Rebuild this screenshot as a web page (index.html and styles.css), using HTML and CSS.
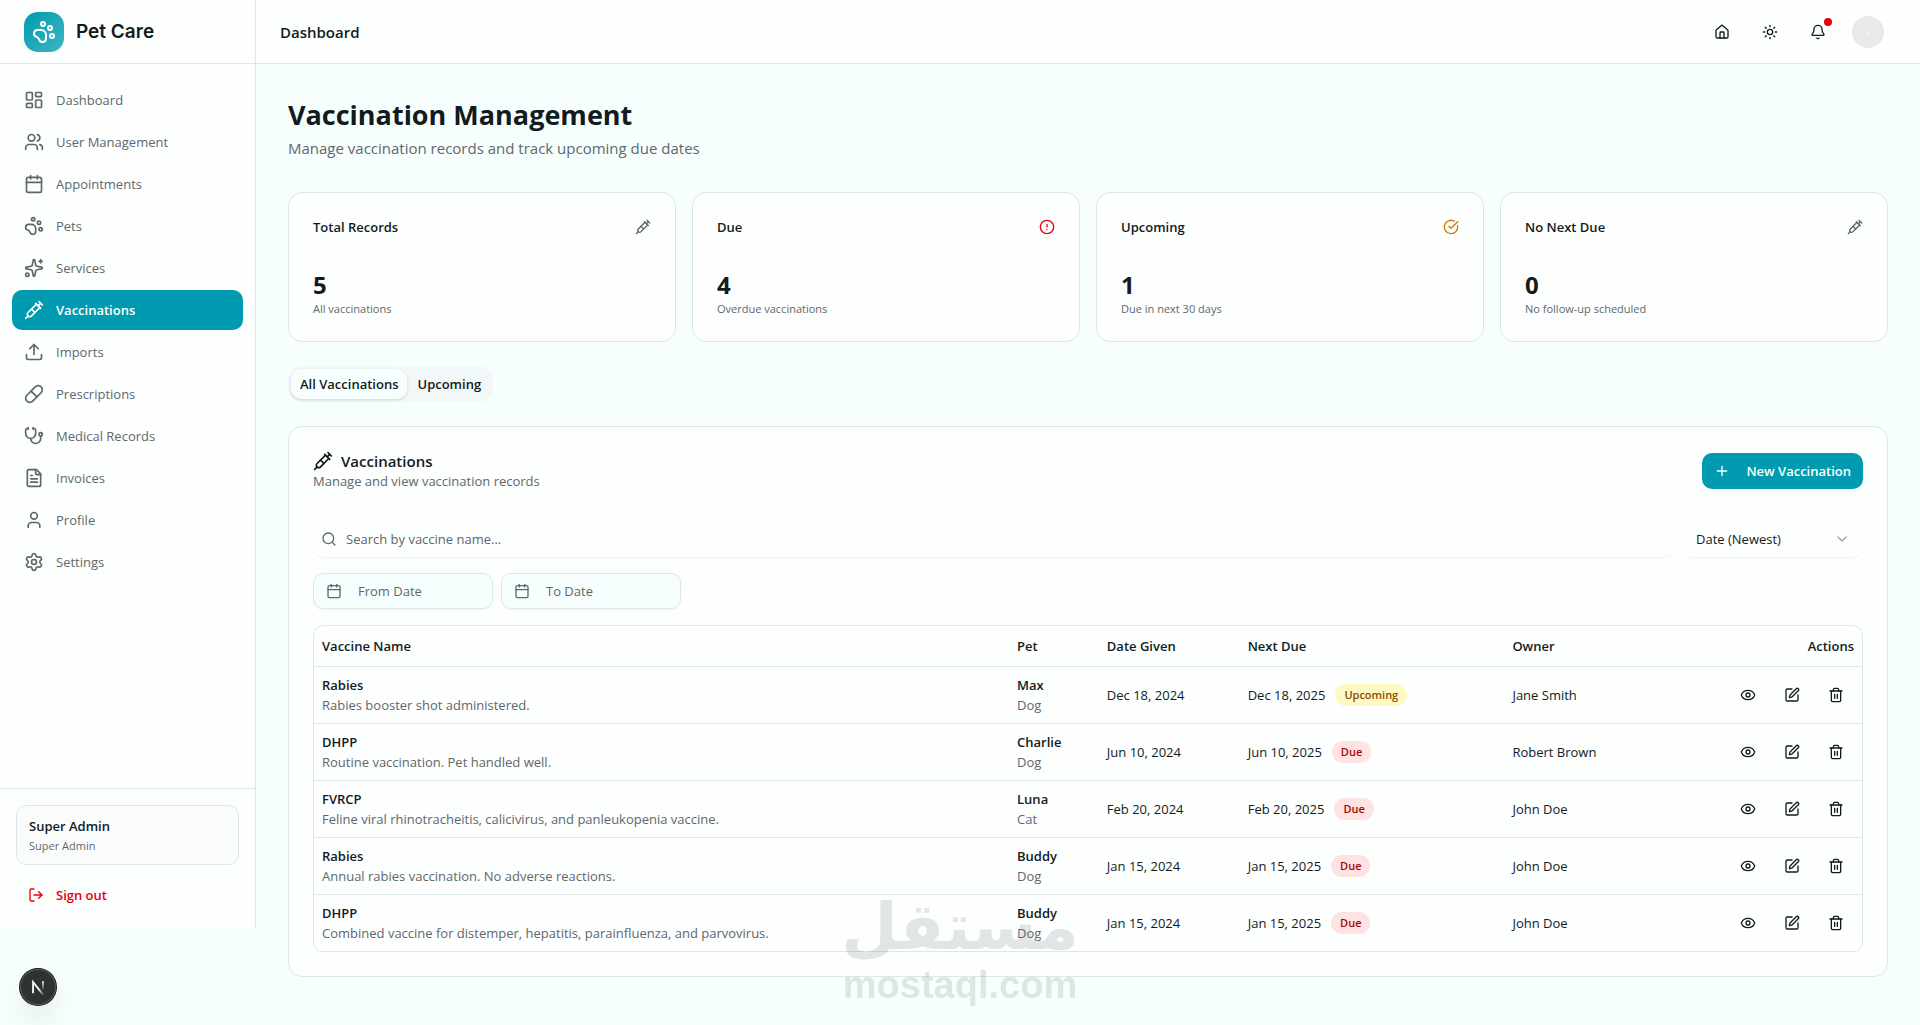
FILE: index.html
```html
<!DOCTYPE html>
<html lang="en">
<head>
<meta charset="utf-8">
<meta name="viewport" content="width=device-width, initial-scale=1">
<title>Vaccination Management - Pet Care</title>
<link rel="stylesheet" href="styles.css">
</head>
<body>
<svg class="sprite" aria-hidden="true">
  <symbol id="i-dashboard" viewBox="0 0 24 24"><rect x="3" y="3" width="7" height="9" rx="1"/><rect x="14" y="3" width="7" height="5" rx="1"/><rect x="14" y="12" width="7" height="9" rx="1"/><rect x="3" y="16" width="7" height="5" rx="1"/></symbol>
  <symbol id="i-users" viewBox="0 0 24 24"><path d="M16 21v-2a4 4 0 0 0-4-4H6a4 4 0 0 0-4 4v2"/><path d="M16 3.128a4 4 0 0 1 0 7.744"/><path d="M22 21v-2a4 4 0 0 0-3-3.87"/><circle cx="9" cy="7" r="4"/></symbol>
  <symbol id="i-calendar" viewBox="0 0 24 24"><path d="M8 2v4"/><path d="M16 2v4"/><rect x="3" y="4" width="18" height="18" rx="2"/><path d="M3 10h18"/></symbol>
  <symbol id="i-paw" viewBox="0 0 24 24"><circle cx="11" cy="4" r="2"/><circle cx="18" cy="8" r="2"/><circle cx="20" cy="16" r="2"/><path d="M9 10a5 5 0 0 1 5 5v3.5a3.5 3.5 0 0 1-6.84 1.045Q6.52 17.48 4.46 16.84A3.5 3.5 0 0 1 5.5 10Z"/></symbol>
  <symbol id="i-sparkles" viewBox="0 0 24 24"><path d="M11.017 2.814a1 1 0 0 1 1.966 0l1.051 5.558a2 2 0 0 0 1.594 1.594l5.558 1.051a1 1 0 0 1 0 1.966l-5.558 1.051a2 2 0 0 0-1.594 1.594l-1.051 5.558a1 1 0 0 1-1.966 0l-1.051-5.558a2 2 0 0 0-1.594-1.594l-5.558-1.051a1 1 0 0 1 0-1.966l5.558-1.051a2 2 0 0 0 1.594-1.594z"/><path d="M20 2v4"/><path d="M22 4h-4"/><circle cx="4" cy="20" r="2"/></symbol>
  <symbol id="i-syringe" viewBox="0 0 24 24"><path d="m18 2 4 4"/><path d="m17 7 3-3"/><path d="M19 9 8.7 19.3c-1 1-2.5 1-3.4 0l-.6-.6c-1-1-1-2.5 0-3.4L15 5"/><path d="m9 11 4 4"/><path d="m5 19-3 3"/><path d="m14 4 6 6"/></symbol>
  <symbol id="i-upload" viewBox="0 0 24 24"><path d="M12 3v12"/><path d="m17 8-5-5-5 5"/><path d="M21 15v4a2 2 0 0 1-2 2H5a2 2 0 0 1-2-2v-4"/></symbol>
  <symbol id="i-pill" viewBox="0 0 24 24"><path d="m10.5 20.5 10-10a4.95 4.95 0 1 0-7-7l-10 10a4.95 4.95 0 1 0 7 7Z"/><path d="m8.5 8.5 7 7"/></symbol>
  <symbol id="i-stethoscope" viewBox="0 0 24 24"><path d="M11 2v2"/><path d="M5 2v2"/><path d="M5 3H4a2 2 0 0 0-2 2v4a6 6 0 0 0 12 0V5a2 2 0 0 0-2-2h-1"/><path d="M8 15a6 6 0 0 0 12 0v-3"/><circle cx="20" cy="10" r="2"/></symbol>
  <symbol id="i-file" viewBox="0 0 24 24"><path d="M15 2H6a2 2 0 0 0-2 2v16a2 2 0 0 0 2 2h12a2 2 0 0 0 2-2V7Z"/><path d="M14 2v4a2 2 0 0 0 2 2h4"/><path d="M10 9H8"/><path d="M16 13H8"/><path d="M16 17H8"/></symbol>
  <symbol id="i-user" viewBox="0 0 24 24"><path d="M19 21v-2a4 4 0 0 0-4-4H9a4 4 0 0 0-4 4v2"/><circle cx="12" cy="7" r="4"/></symbol>
  <symbol id="i-settings" viewBox="0 0 24 24"><path d="M9.671 4.136a2.34 2.34 0 0 1 4.659 0 2.34 2.34 0 0 0 3.319 1.915 2.34 2.34 0 0 1 2.33 4.033 2.34 2.34 0 0 0 0 3.831 2.34 2.34 0 0 1-2.33 4.033 2.34 2.34 0 0 0-3.319 1.915 2.34 2.34 0 0 1-4.659 0 2.34 2.34 0 0 0-3.32-1.915 2.34 2.34 0 0 1-2.33-4.033 2.34 2.34 0 0 0 0-3.831A2.34 2.34 0 0 1 6.35 6.051a2.34 2.34 0 0 0 3.319-1.915"/><circle cx="12" cy="12" r="3"/></symbol>
  <symbol id="i-logout" viewBox="0 0 24 24"><path d="m16 17 5-5-5-5"/><path d="M21 12H9"/><path d="M9 21H5a2 2 0 0 1-2-2V5a2 2 0 0 1 2-2h4"/></symbol>
  <symbol id="i-home" viewBox="0 0 24 24"><path d="M15 21v-8a1 1 0 0 0-1-1h-4a1 1 0 0 0-1 1v8"/><path d="M3 10a2 2 0 0 1 .709-1.528l7-6a2 2 0 0 1 2.582 0l7 6A2 2 0 0 1 21 10v9a2 2 0 0 1-2 2H5a2 2 0 0 1-2-2z"/></symbol>
  <symbol id="i-sun" viewBox="0 0 24 24"><circle cx="12" cy="12" r="4"/><path d="M12 2v2M12 20v2M4.93 4.93l1.41 1.41M17.66 17.66l1.41 1.41M2 12h2M20 12h2M6.34 17.66l-1.41 1.41M19.07 4.93l-1.41 1.41"/></symbol>
  <symbol id="i-bell" viewBox="0 0 24 24"><path d="M10.268 21a2 2 0 0 0 3.464 0"/><path d="M3.262 15.326A1 1 0 0 0 4 17h16a1 1 0 0 0 .74-1.673C19.41 13.956 18 12.499 18 8A6 6 0 0 0 6 8c0 4.499-1.411 5.956-2.738 7.326"/></symbol>
  <symbol id="i-alert" viewBox="0 0 24 24"><circle cx="12" cy="12" r="10"/><path d="M12 8v4M12 16h.01"/></symbol>
  <symbol id="i-check" viewBox="0 0 24 24"><path d="M21.801 10A10 10 0 1 1 17 3.335"/><path d="m9 11 3 3L22 4"/></symbol>
  <symbol id="i-plus" viewBox="0 0 24 24"><path d="M5 12h14M12 5v14"/></symbol>
  <symbol id="i-search" viewBox="0 0 24 24"><circle cx="11" cy="11" r="8"/><path d="m21 21-4.34-4.34"/></symbol>
  <symbol id="i-chevron" viewBox="0 0 24 24"><path d="m6 9 6 6 6-6"/></symbol>
  <symbol id="i-eye" viewBox="0 0 24 24"><path d="M2.062 12.348a1 1 0 0 1 0-.696 10.75 10.75 0 0 1 19.876 0 1 1 0 0 1 0 .696 10.75 10.75 0 0 1-19.876 0"/><circle cx="12" cy="12" r="3"/></symbol>
  <symbol id="i-edit" viewBox="0 0 24 24"><path d="M12 3H5a2 2 0 0 0-2 2v14a2 2 0 0 0 2 2h14a2 2 0 0 0 2-2v-7"/><path d="M18.375 2.625a1 1 0 0 1 3 3l-9.013 9.014a2 2 0 0 1-.853.505l-2.873.84a.5.5 0 0 1-.62-.62l.84-2.873a2 2 0 0 1 .506-.852z"/></symbol>
  <symbol id="i-trash" viewBox="0 0 24 24"><path d="M3 6h18"/><path d="M19 6v14c0 1-1 2-2 2H7c-1 0-2-1-2-2V6"/><path d="M8 6V4c0-1 1-2 2-2h4c1 0 2 1 2 2v2"/><path d="M10 11v6M14 11v6"/></symbol>
</svg>

<div class="app">
  <aside class="sidebar">
    <div class="brand">
      <span class="brand-mark"><svg class="icon icon-brand"><use href="#i-paw"/></svg></span>
      <span class="brand-name">Pet Care</span>
    </div>
    <nav class="nav">
      <a class="nav-link" href="#"><svg class="icon icon-lg"><use href="#i-dashboard"/></svg>Dashboard</a>
      <a class="nav-link" href="#"><svg class="icon icon-lg"><use href="#i-users"/></svg>User Management</a>
      <a class="nav-link" href="#"><svg class="icon icon-lg"><use href="#i-calendar"/></svg>Appointments</a>
      <a class="nav-link" href="#"><svg class="icon icon-lg"><use href="#i-paw"/></svg>Pets</a>
      <a class="nav-link" href="#"><svg class="icon icon-lg"><use href="#i-sparkles"/></svg>Services</a>
      <a class="nav-link active" href="#" aria-current="page"><svg class="icon icon-lg"><use href="#i-syringe"/></svg>Vaccinations</a>
      <a class="nav-link" href="#"><svg class="icon icon-lg"><use href="#i-upload"/></svg>Imports</a>
      <a class="nav-link" href="#"><svg class="icon icon-lg"><use href="#i-pill"/></svg>Prescriptions</a>
      <a class="nav-link" href="#"><svg class="icon icon-lg"><use href="#i-stethoscope"/></svg>Medical Records</a>
      <a class="nav-link" href="#"><svg class="icon icon-lg"><use href="#i-file"/></svg>Invoices</a>
      <a class="nav-link" href="#"><svg class="icon icon-lg"><use href="#i-user"/></svg>Profile</a>
      <a class="nav-link" href="#"><svg class="icon icon-lg"><use href="#i-settings"/></svg>Settings</a>
    </nav>
    <div class="account">
      <div class="account-card">
        <div class="account-name">Super Admin</div>
        <div class="account-role">Super Admin</div>
      </div>
      <button class="sign-out" type="button"><svg class="icon"><use href="#i-logout"/></svg>Sign out</button>
    </div>
  </aside>

  <div class="page">
    <header class="topbar">
      <div class="topbar-title">Dashboard</div>
      <div class="topbar-actions">
        <button class="icon-button" type="button" aria-label="Home"><svg class="icon"><use href="#i-home"/></svg></button>
        <button class="icon-button" type="button" aria-label="Toggle theme"><svg class="icon"><use href="#i-sun"/></svg></button>
        <button class="icon-button" type="button" aria-label="Notifications"><svg class="icon"><use href="#i-bell"/></svg><span class="dot"></span></button>
        <button class="avatar-button" type="button" aria-label="Account"><span class="avatar">S</span></button>
      </div>
    </header>

    <main class="content">
      <div class="heading">
        <h1>Vaccination Management</h1>
        <p>Manage vaccination records and track upcoming due dates</p>
      </div>

      <section class="stats">
        <article class="stat">
          <div class="stat-head"><h2>Total Records</h2><svg class="icon muted"><use href="#i-syringe"/></svg></div>
          <div class="stat-value">5</div><div class="stat-note">All vaccinations</div>
        </article>
        <article class="stat">
          <div class="stat-head"><h2>Due</h2><svg class="icon danger"><use href="#i-alert"/></svg></div>
          <div class="stat-value">4</div><div class="stat-note">Overdue vaccinations</div>
        </article>
        <article class="stat">
          <div class="stat-head"><h2>Upcoming</h2><svg class="icon warning"><use href="#i-check"/></svg></div>
          <div class="stat-value">1</div><div class="stat-note">Due in next 30 days</div>
        </article>
        <article class="stat">
          <div class="stat-head"><h2>No Next Due</h2><svg class="icon muted"><use href="#i-syringe"/></svg></div>
          <div class="stat-value">0</div><div class="stat-note">No follow-up scheduled</div>
        </article>
      </section>

      <div class="tabs" role="tablist">
        <button class="tab selected" type="button" role="tab" aria-selected="true">All Vaccinations</button>
        <button class="tab" type="button" role="tab" aria-selected="false">Upcoming</button>
      </div>

      <section class="panel">
        <div class="panel-head">
          <div>
            <h2 class="panel-title"><svg class="icon icon-lg"><use href="#i-syringe"/></svg>Vaccinations</h2>
            <p class="panel-note">Manage and view vaccination records</p>
          </div>
          <button class="primary" type="button"><svg class="icon"><use href="#i-plus"/></svg>New Vaccination</button>
        </div>

        <div class="filters">
          <label class="search"><svg class="icon muted"><use href="#i-search"/></svg><input type="search" placeholder="Search by vaccine name..." aria-label="Search by vaccine name"></label>
          <div class="select">
            <select aria-label="Sort by"><option>Date (Newest)</option><option>Date (Oldest)</option></select>
            <svg class="icon"><use href="#i-chevron"/></svg>
          </div>
        </div>
        <div class="dates">
          <button class="date" type="button"><svg class="icon"><use href="#i-calendar"/></svg>From Date</button>
          <button class="date" type="button"><svg class="icon"><use href="#i-calendar"/></svg>To Date</button>
        </div>

        <div class="table-wrap">
          <table>
            <colgroup><col class="c-name"><col class="c-pet"><col class="c-given"><col class="c-next"><col class="c-owner"><col class="c-actions"></colgroup>
            <thead><tr><th>Vaccine Name</th><th>Pet</th><th>Date Given</th><th>Next Due</th><th>Owner</th><th class="end">Actions</th></tr></thead>
            <tbody>
              <tr>
                <td><strong>Rabies</strong><span class="sub">Rabies booster shot administered.</span></td>
                <td><strong>Max</strong><span class="sub">Dog</span></td>
                <td>Dec 18, 2024</td>
                <td><div class="due">Dec 18, 2025<span class="badge soon">Upcoming</span></div></td>
                <td>Jane Smith</td>
                <td><div class="row-actions"><button class="icon-button" type="button" aria-label="View"><svg class="icon"><use href="#i-eye"/></svg></button><button class="icon-button" type="button" aria-label="Edit"><svg class="icon"><use href="#i-edit"/></svg></button><button class="icon-button" type="button" aria-label="Delete"><svg class="icon"><use href="#i-trash"/></svg></button></div></td>
              </tr>
              <tr>
                <td><strong>DHPP</strong><span class="sub">Routine vaccination. Pet handled well.</span></td>
                <td><strong>Charlie</strong><span class="sub">Dog</span></td>
                <td>Jun 10, 2024</td>
                <td><div class="due">Jun 10, 2025<span class="badge late">Due</span></div></td>
                <td>Robert Brown</td>
                <td><div class="row-actions"><button class="icon-button" type="button" aria-label="View"><svg class="icon"><use href="#i-eye"/></svg></button><button class="icon-button" type="button" aria-label="Edit"><svg class="icon"><use href="#i-edit"/></svg></button><button class="icon-button" type="button" aria-label="Delete"><svg class="icon"><use href="#i-trash"/></svg></button></div></td>
              </tr>
              <tr>
                <td><strong>FVRCP</strong><span class="sub">Feline viral rhinotracheitis, calicivirus, and panleukopenia vaccine.</span></td>
                <td><strong>Luna</strong><span class="sub">Cat</span></td>
                <td>Feb 20, 2024</td>
                <td><div class="due">Feb 20, 2025<span class="badge late">Due</span></div></td>
                <td>John Doe</td>
                <td><div class="row-actions"><button class="icon-button" type="button" aria-label="View"><svg class="icon"><use href="#i-eye"/></svg></button><button class="icon-button" type="button" aria-label="Edit"><svg class="icon"><use href="#i-edit"/></svg></button><button class="icon-button" type="button" aria-label="Delete"><svg class="icon"><use href="#i-trash"/></svg></button></div></td>
              </tr>
              <tr>
                <td><strong>Rabies</strong><span class="sub">Annual rabies vaccination. No adverse reactions.</span></td>
                <td><strong>Buddy</strong><span class="sub">Dog</span></td>
                <td>Jan 15, 2024</td>
                <td><div class="due">Jan 15, 2025<span class="badge late">Due</span></div></td>
                <td>John Doe</td>
                <td><div class="row-actions"><button class="icon-button" type="button" aria-label="View"><svg class="icon"><use href="#i-eye"/></svg></button><button class="icon-button" type="button" aria-label="Edit"><svg class="icon"><use href="#i-edit"/></svg></button><button class="icon-button" type="button" aria-label="Delete"><svg class="icon"><use href="#i-trash"/></svg></button></div></td>
              </tr>
              <tr>
                <td><strong>DHPP</strong><span class="sub">Combined vaccine for distemper, hepatitis, parainfluenza, and parvovirus.</span></td>
                <td><strong>Buddy</strong><span class="sub">Dog</span></td>
                <td>Jan 15, 2024</td>
                <td><div class="due">Jan 15, 2025<span class="badge late">Due</span></div></td>
                <td>John Doe</td>
                <td><div class="row-actions"><button class="icon-button" type="button" aria-label="View"><svg class="icon"><use href="#i-eye"/></svg></button><button class="icon-button" type="button" aria-label="Edit"><svg class="icon"><use href="#i-edit"/></svg></button><button class="icon-button" type="button" aria-label="Delete"><svg class="icon"><use href="#i-trash"/></svg></button></div></td>
              </tr>
            </tbody>
          </table>
        </div>
      </section>
    </main>
  </div>
</div>

<div class="watermark">
  <span class="watermark-ar" lang="ar" dir="rtl">مستقل</span>
  <span class="watermark-en">mostaql.com</span>
</div>

<button class="dev-badge" type="button" aria-label="Open developer tools">
  <svg viewBox="0 0 40 40" width="36" height="36" fill="none">
    <defs>
      <linearGradient id="fade-diagonal" x1="22" y1="22" x2="27" y2="29" gradientUnits="userSpaceOnUse"><stop stop-color="#fff"/><stop offset="1" stop-color="#fff" stop-opacity="0"/></linearGradient>
      <linearGradient id="fade-stem" x1="25" y1="13" x2="25" y2="24" gradientUnits="userSpaceOnUse"><stop stop-color="#fff"/><stop offset="1" stop-color="#fff" stop-opacity="0"/></linearGradient>
    </defs>
    <path d="M14.500 27V14.500L26 29" stroke="url(#fade-diagonal)" stroke-width="2"/>
    <path d="M25.500 13.500V23" stroke="url(#fade-stem)" stroke-width="2"/>
  </svg>
</button>
</body>
</html>
```

FILE: styles.css
```css
:root {
  --bg: #f7fffe;
  --card: #fdfefe;
  --border: #dce8e8;
  --text: #121b1d;
  --muted: #5e686b;
  --primary: #009bb0;
  --danger: #e7000b;
}

* { box-sizing: border-box; }

body {
  margin: 0;
  background: var(--bg);
  color: var(--text);
  font: 13px/20px "Open Sans", "Noto Sans", sans-serif;
}

h1, h2, p { margin: 0; }
button, input, select { font: inherit; color: inherit; }
button { border: 0; padding: 0; background: none; cursor: pointer; }
a { color: inherit; text-decoration: none; }

.sprite { display: none; }
.icon {
  flex: none;
  width: 16px;
  height: 16px;
  fill: none;
  stroke: currentColor;
  stroke-width: 2;
  stroke-linecap: round;
  stroke-linejoin: round;
}
.icon-lg { width: 20px; height: 20px; }
.icon-brand { width: 24px; height: 24px; }
.muted { color: var(--muted); }
.danger { color: var(--danger); }
.warning { color: #d07a08; }

.app { display: flex; align-items: flex-start; min-height: 100vh; }

/* Sidebar */
.sidebar {
  flex: none;
  display: flex;
  flex-direction: column;
  width: 256px;
  min-height: calc(100vh - 96px);
  background: var(--card);
  border-right: 1px solid var(--border);
}
.brand {
  display: flex;
  align-items: center;
  gap: 12px;
  height: 64px;
  padding: 0 24px;
  border-bottom: 1px solid var(--border);
}
.brand-mark {
  display: grid;
  place-items: center;
  width: 40px;
  height: 40px;
  border-radius: 14px;
  background: linear-gradient(135deg, #009bb0, #40b4c3);
  color: #fff;
}
.brand-name { font: 600 19px/28px Inter, sans-serif; }
.nav { flex: 1; display: flex; flex-direction: column; gap: 2px; padding: 16px 12px; }
.nav-link {
  display: flex;
  align-items: center;
  gap: 12px;
  height: 40px;
  padding: 0 12px;
  border-radius: 10px;
  color: var(--muted);
}
.nav-link.active { background: var(--primary); color: #fff; font-weight: 600; }
.account {
  display: flex;
  flex-direction: column;
  gap: 12px;
  padding: 16px;
  border-top: 1px solid var(--border);
}
.account-card {
  display: flex;
  flex-direction: column;
  gap: 2px;
  padding: 10px 12px;
  border: 1px solid var(--border);
  border-radius: 10px;
  background: #fafcfc;
}
.account-name { font-weight: 600; }
.account-role { font-size: 11px; line-height: 16px; color: var(--muted); }
.sign-out {
  display: flex;
  align-items: center;
  gap: 12px;
  height: 36px;
  padding: 0 12px;
  color: var(--danger);
  font-weight: 600;
}

/* Top bar */
.page { flex: 1; min-width: 0; }
.topbar {
  display: flex;
  align-items: center;
  justify-content: space-between;
  height: 64px;
  padding: 0 32px 0 24px;
  background: var(--card);
  border-bottom: 1px solid var(--border);
}
.topbar-title { font-size: 15px; font-weight: 600; line-height: 24px; }
.topbar-actions { display: flex; align-items: center; gap: 12px; }
.icon-button {
  position: relative;
  display: grid;
  place-items: center;
  width: 36px;
  height: 36px;
}
.dot {
  position: absolute;
  top: 4px;
  right: 4px;
  width: 8px;
  height: 8px;
  border-radius: 50%;
  background: var(--danger);
}
.avatar-button { display: grid; place-items: center; width: 40px; height: 40px; }
.avatar {
  display: grid;
  place-items: center;
  width: 32px;
  height: 32px;
  border-radius: 50%;
  background: #e8e9ea;
  color: #f6f7f7;
  font-size: 8px;
}

/* Content */
.content { display: flex; flex-direction: column; gap: 24px; padding: 32px; }
.heading { display: flex; flex-direction: column; gap: 2px; padding-bottom: 8px; }
.heading h1 { font-size: 27px; line-height: 38px; font-weight: 700; }
.heading p { font-size: 15px; line-height: 24px; color: var(--muted); }

.stats { display: grid; grid-template-columns: repeat(4, 1fr); gap: 16px; }
.stat {
  padding: 24px;
  border: 1px solid var(--border);
  border-radius: 14px;
  background: var(--card);
}
.stat-head {
  display: flex;
  align-items: center;
  justify-content: space-between;
  margin-bottom: 32px;
}
.stat-head h2 { font-size: 13px; line-height: 20px; font-weight: 600; }
.stat-value { font-size: 24px; line-height: 32px; font-weight: 700; }
.stat-note { font-size: 11px; line-height: 16px; color: var(--muted); }

.tabs {
  align-self: flex-start;
  display: flex;
  gap: 1px;
  height: 36px;
  padding: 3px;
  border-radius: 14px;
  background: #f2f7f7;
}
.tab { padding: 0 9px; border-radius: 10px; font-weight: 600; }
.tab.selected { background: var(--bg); box-shadow: 0 1px 3px rgba(0, 0, 0, .15); }

.panel {
  padding: 24px;
  border: 1px solid var(--border);
  border-radius: 14px;
  background: var(--card);
}
.panel-head {
  display: flex;
  align-items: center;
  justify-content: space-between;
  margin-bottom: 30px;
}
.panel-title {
  display: flex;
  align-items: center;
  gap: 8px;
  font-size: 15px;
  line-height: 20px;
  font-weight: 600;
}
.panel-note { color: var(--muted); }
.primary {
  display: flex;
  align-items: center;
  gap: 16px;
  height: 36px;
  padding: 0 12px;
  border-radius: 10px;
  background: var(--primary);
  color: #fff;
  font-weight: 600;
}

.filters { display: flex; gap: 8px; margin-bottom: 16px; }
.search {
  flex: 1;
  display: flex;
  align-items: center;
  gap: 9px;
  height: 36px;
  padding: 0 8px;
  border-radius: 10px;
  box-shadow: 0 1px 2px rgba(0, 0, 0, .05);
}
.search input { flex: 1; border: 0; padding: 0; background: none; outline: 0; }
.search input::placeholder { color: var(--muted); opacity: 1; }
.select {
  display: grid;
  align-items: center;
  width: 180px;
  height: 36px;
  border-radius: 10px;
  box-shadow: 0 1px 2px rgba(0, 0, 0, .05);
}
.select > * { grid-area: 1 / 1; }
.select select {
  appearance: none;
  width: 100%;
  height: 36px;
  padding: 0 13px;
  border: 0;
  background: none;
}
.select .icon { justify-self: end; margin-right: 13px; opacity: .4; pointer-events: none; }

.dates { display: flex; gap: 8px; margin-bottom: 16px; }
.date {
  display: flex;
  align-items: center;
  gap: 16px;
  width: 180px;
  height: 36px;
  padding: 0 12px;
  border: 1px solid var(--border);
  border-radius: 10px;
  background: var(--bg);
  box-shadow: 0 1px 2px rgba(0, 0, 0, .05);
  color: var(--muted);
}

/* Table */
.table-wrap { border: 1px solid var(--border); border-radius: 10px; overflow: hidden; }
table { width: 100%; table-layout: fixed; border-collapse: separate; border-spacing: 0; }
.c-name { width: 44.9%; }
.c-pet { width: 5.8%; }
.c-given { width: 9.1%; }
.c-next { width: 17.1%; }
.c-owner { width: 13.1%; }
.c-actions { width: 10%; }
th, td { padding: 0 8px; text-align: left; border-bottom: 1px solid var(--border); }
th { height: 41px; font-weight: 600; }
td { height: 57px; }
tbody tr:last-child td { height: 56px; border-bottom: 0; }
th.end { text-align: right; }
td strong, .sub { display: block; }
td strong { font-weight: 600; }
.sub { color: var(--muted); }
.due { display: flex; align-items: center; gap: 10px; }
.badge {
  padding: 3px 9px;
  border-radius: 11px;
  font-size: 11px;
  line-height: 16px;
  font-weight: 600;
}
.soon { background: #fef9c2; color: #894b00; }
.late { background: #ffe2e2; color: #9f0712; }
.row-actions { display: flex; justify-content: flex-end; gap: 8px; }

/* Overlays */
.watermark {
  position: fixed;
  left: 0;
  right: 0;
  bottom: 20px;
  display: flex;
  flex-direction: column;
  align-items: center;
  color: #5a6464;
  opacity: .16;
  pointer-events: none;
  font-weight: 700;
}
.watermark-ar { font-family: "DejaVu Sans", sans-serif; font-size: 65px; line-height: 76px; }
.watermark-en { font-family: "Liberation Sans", Arial, sans-serif; font-size: 38px; line-height: 40px; }
.dev-badge {
  position: fixed;
  left: 20px;
  bottom: 20px;
  width: 36px;
  height: 36px;
  border-radius: 50%;
  background: #2e3233;
  box-shadow: 0 0 0 1px #17191a, inset 0 0 0 1px #555a5b, 0 16px 32px -8px rgba(0, 0, 0, .24);
}
```
